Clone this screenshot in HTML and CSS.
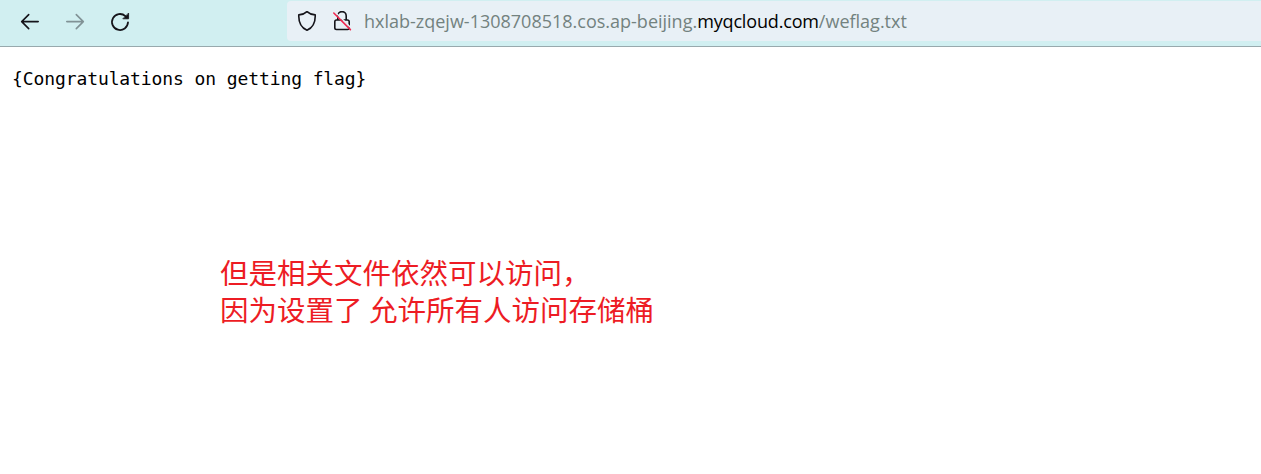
FILE: index.html
```html
<!DOCTYPE html>
<html lang="zh-CN">
<head>
<meta charset="utf-8">
<title>weflag.txt</title>
<link rel="stylesheet" href="styles.css">
</head>
<body>
<header class="toolbar">
  <nav class="nav">
    <svg class="icon" viewBox="0 0 20 20"><path d="M18.200 9.600H2M8.700 2.600 1.700 9.600 8.700 16.600"/></svg>
    <svg class="icon disabled" viewBox="0 0 20 20"><path d="M1.800 9.600H18M11.300 2.600 18.300 9.600 11.300 16.600"/></svg>
    <svg class="icon" viewBox="0 0 20 20"><path class="ring" d="M18 10.300a8 8 0 1 1-2.600-6.200L17 5.700"/><path class="head" d="M18.600 1.400v5.400h-5.400Z"/></svg>
  </nav>
  <div class="urlbar">
    <svg class="icon" viewBox="0 0 20 20"><path d="M10 .6C12 2.500 15 3.600 18.200 3.900 18.500 10.500 16 16.500 10 19.200 4 16.500 1.500 10.500 1.800 3.900 5 3.600 8 2.500 10 .6Z"/></svg>
    <svg class="icon lock" viewBox="0 0 20 20"><path d="M5.800 9V4.800a4.200 4.200 0 0 1 8.400 0V9M4.500 9h11a1.700 1.700 0 0 1 1.700 1.700v6.100a1.700 1.700 0 0 1-1.700 1.700h-11a1.700 1.700 0 0 1-1.700-1.700v-6.100A1.700 1.700 0 0 1 4.500 9Z"/><path class="gap" d="M2.800 .8 19.500 17.500"/><path class="slash" d="M1.800 2 18.400 18.600"/></svg>
    <div class="url"><span class="sub">hxlab-zqejw-1308708518.cos.ap-beijing.</span><span class="domain">myqcloud.com</span><span class="path">/weflag.txt</span></div>
  </div>
</header>
<main class="page">
  <pre class="text">{Congratulations on getting flag}</pre>
  <div class="note"><p class="line">但是相关文件依然可以访问，</p><p class="line">因为设置了 允许所有人访问存储桶</p></div>
</main>
</body>
</html>
```
FILE: styles.css
```css
body { margin: 0; background: #fff; }
.toolbar { box-sizing: border-box; height: 47px; display: flex; background: #d1eff1; border-bottom: 1px solid #98a9ad; }
.nav { width: 287px; box-sizing: border-box; padding: 12px 0 0 20px; display: flex; gap: 25px; }
.icon { width: 20px; height: 20px; fill: none; stroke: #15141a; stroke-width: 1.6; stroke-linecap: round; stroke-linejoin: round; flex: none; }
.disabled { opacity: .42; }
.ring { stroke-width: 1.8; }
.head { fill: #15141a; stroke-width: .8; }
.urlbar { flex: 1; height: 40px; margin-top: 1px; box-sizing: border-box; padding: 10px 0 0 10px; display: flex; background: #e8f0f6; border-radius: 4px 0 0 4px; }
.lock { margin-left: 15px; }
.gap { stroke: #e8f0f6; stroke-linecap: butt; }
.slash { stroke: #f02850; }
.url { margin-left: 12px; font: 18px/20px "Open Sans", "Noto Sans", sans-serif; white-space: nowrap; color: #73827f; }
.domain { color: #000; letter-spacing: -.16px; }
.page { padding-left: 12px; }
.text { margin: 0; padding-top: 20px; font: 18px/24px "DejaVu Sans Mono", monospace; letter-spacing: -.1px; color: #000; }
.note { padding: 162px 0 0 208px; color: #ed1c24; }
.line { margin: 0; font: 28.500px/37px "Noto Sans CJK SC", sans-serif; white-space: nowrap; }
```
